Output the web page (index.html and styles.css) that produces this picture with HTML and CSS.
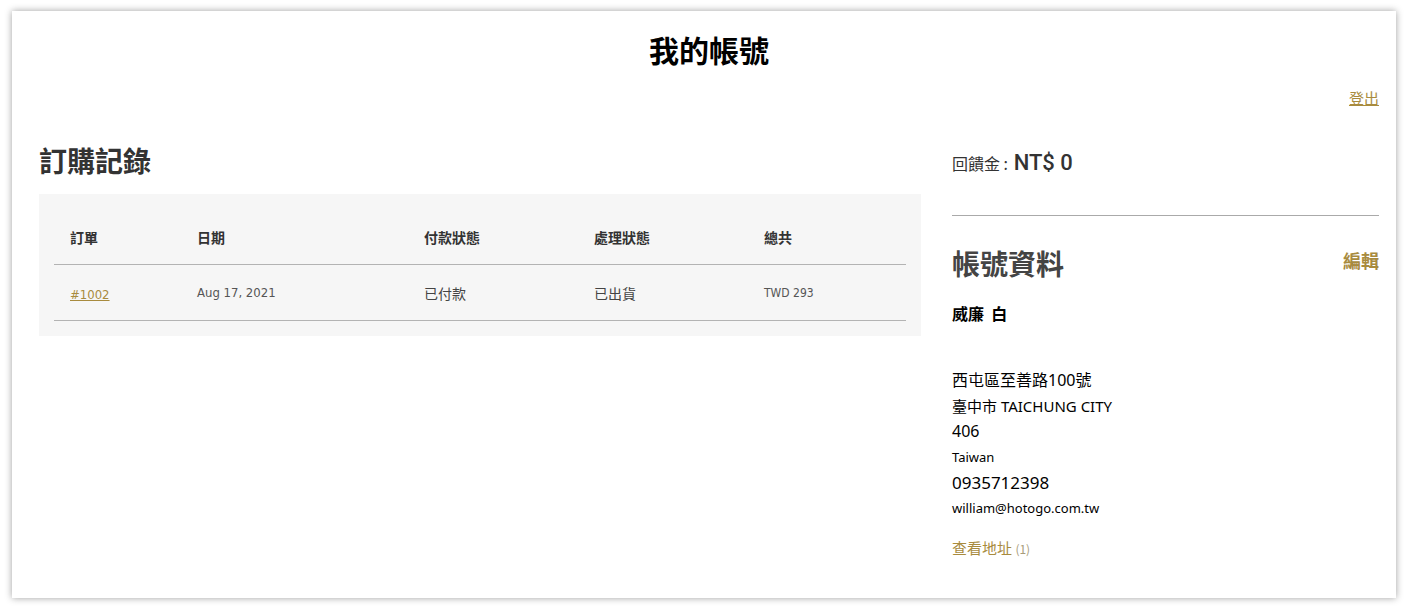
FILE: index.html
```html
<!DOCTYPE html>
<html lang="zh-Hant">

<head>
  <meta charset="UTF-8">
  <meta name="viewport" content="width=device-width, initial-scale=1.0">
  <title>我的帳號</title>
  <link rel="stylesheet" href="styles.css">
</head>

<body>
  <div class="card">
    <header class="page-title">
      <h1>我的帳號</h1>
    </header>

    <div class="logout-row">
      <a href="#" class="gold-link">登出</a>
    </div>

    <div class="columns">
      <section class="orders">
        <h2>訂購記錄</h2>
        <div class="table-box">
          <table>
            <thead>
              <tr>
                <th class="col-order">訂單</th>
                <th class="col-date">日期</th>
                <th class="col-pay">付款狀態</th>
                <th class="col-ship">處理狀態</th>
                <th>總共</th>
              </tr>
            </thead>
            <tbody>
              <tr>
                <td><a href="#" class="gold-link order-no">#1002</a></td>
                <td class="latin date">Aug 17, 2021</td>
                <td>已付款</td>
                <td>已出貨</td>
                <td class="latin total">TWD 293</td>
              </tr>
            </tbody>
          </table>
        </div>
      </section>

      <aside class="account">
        <p class="credit">回饋金 : <span class="credit-amount">NT$ 0</span></p>
        <hr>
        <div class="account-head">
          <h2>帳號資料</h2>
          <a href="#" class="edit">編輯</a>
        </div>
        <p class="name">威廉&nbsp;&nbsp;白</p>
        <div class="address">
          <p class="a-16">西屯區至善路100號</p>
          <p class="a-15">臺中市 TAICHUNG CITY</p>
          <p class="a-16">406</p>
          <p class="a-13">Taiwan</p>
          <p class="a-17">0935712398</p>
          <p class="a-13">william@hotogo.com.tw</p>
        </div>
        <a href="#" class="view-address">查看地址 <span>(1)</span></a>
      </aside>
    </div>
  </div>
</body>

</html>
```

FILE: styles.css
```css
body {
  margin: 0;
  padding: 11px 16px 15px 12px;
  background: #ffffff;
  font-family: "Noto Sans", "Noto Sans CJK TC", sans-serif;
  color: #333;
}

p {
  margin: 0;
}

.card {
  height: 587px;
  box-sizing: border-box;
  background: #fff;
  box-shadow: 0 0 7px rgba(0, 0, 0, 0.38);
  padding: 0 17px 0 27px;
}

.page-title {
  text-align: center;
  padding-top: 18px;
}

.page-title h1 {
  margin: 0;
  font-family: "Noto Sans CJK TC", sans-serif;
  font-size: 30px;
  line-height: 40px;
  font-weight: 700;
  color: #000;
}

.logout-row {
  text-align: right;
  margin-top: 19px;
  line-height: 20px;
}

.gold-link {
  color: #a88b3e;
  font-size: 15px;
  text-decoration: underline;
}

.columns {
  display: flex;
  gap: 31px;
  margin-top: 34px;
}

.orders {
  width: 882px;
  flex-shrink: 0;
}

.orders h2,
.account-head h2 {
  margin: 0;
  font-family: "Noto Sans CJK TC", sans-serif;
  font-size: 28px;
  line-height: 36px;
  font-weight: 700;
  color: #333;
}

.table-box {
  margin-top: 16px;
  background: #f6f6f6;
  padding: 15px;
}

table {
  width: 100%;
  border-collapse: collapse;
  font-family: "Noto Sans CJK TC", sans-serif;
}

th,
td {
  text-align: left;
  padding: 0 0 0 16px;
  border-bottom: 1px solid #b3b3b3;
}

th {
  height: 54px;
  padding-top: 1px;
  font-size: 14px;
  font-weight: 700;
  color: #333;
}

td {
  height: 55px;
  font-size: 14px;
  color: #444;
}

.col-order {
  width: 111px;
}

.col-date {
  width: 211px;
}

.col-pay,
.col-ship {
  width: 154px;
}

.order-no {
  font-family: "DejaVu Sans Condensed", "Roboto", sans-serif;
  font-size: 13px;
}

.latin {
  font-family: "DejaVu Sans Condensed", "Roboto", sans-serif;
  color: #555;
}

.date {
  font-size: 13px;
}

.total {
  font-size: 12px;
}

.account {
  flex: 1;
  padding-top: 6px;
}

.credit {
  font-family: "Noto Sans CJK TC", sans-serif;
  font-size: 16px;
  line-height: 30px;
  color: #333;
}

.credit-amount {
  font-family: "Roboto", sans-serif;
  font-size: 22px;
  font-weight: 500;
  margin-left: 2px;
}

.account hr {
  border: 0;
  border-top: 1px solid #aaa;
  margin: 37px 0 0;
}

.account-head {
  display: flex;
  justify-content: space-between;
  align-items: center;
  margin-top: 29px;
}

.account-head h2 {
  color: #444;
}

.edit {
  color: #a88b3e;
  font-family: "Noto Sans CJK TC", sans-serif;
  font-size: 18px;
  font-weight: 700;
  text-decoration: none;
  margin-top: -6px;
}

.name {
  margin-top: 20px;
  font-family: "Noto Sans CJK TC", sans-serif;
  font-size: 16px;
  line-height: 24px;
  font-weight: 700;
  color: #000;
}

.address {
  margin-top: 43px;
  color: #000;
}

.address p {
  line-height: 25.5px;
}

.a-13 {
  font-size: 13px;
}

.a-15 {
  font-size: 15px;
}

.a-16 {
  font-size: 16px;
}

.a-17 {
  font-size: 17px;
}

.view-address {
  display: inline-block;
  margin-top: 15px;
  line-height: 24px;
  font-family: "Noto Sans CJK TC", sans-serif;
  font-size: 15px;
  color: #a88b3e;
  text-decoration: none;
}

.view-address span {
  font-size: 12px;
  color: #a89c7a;
}
```
